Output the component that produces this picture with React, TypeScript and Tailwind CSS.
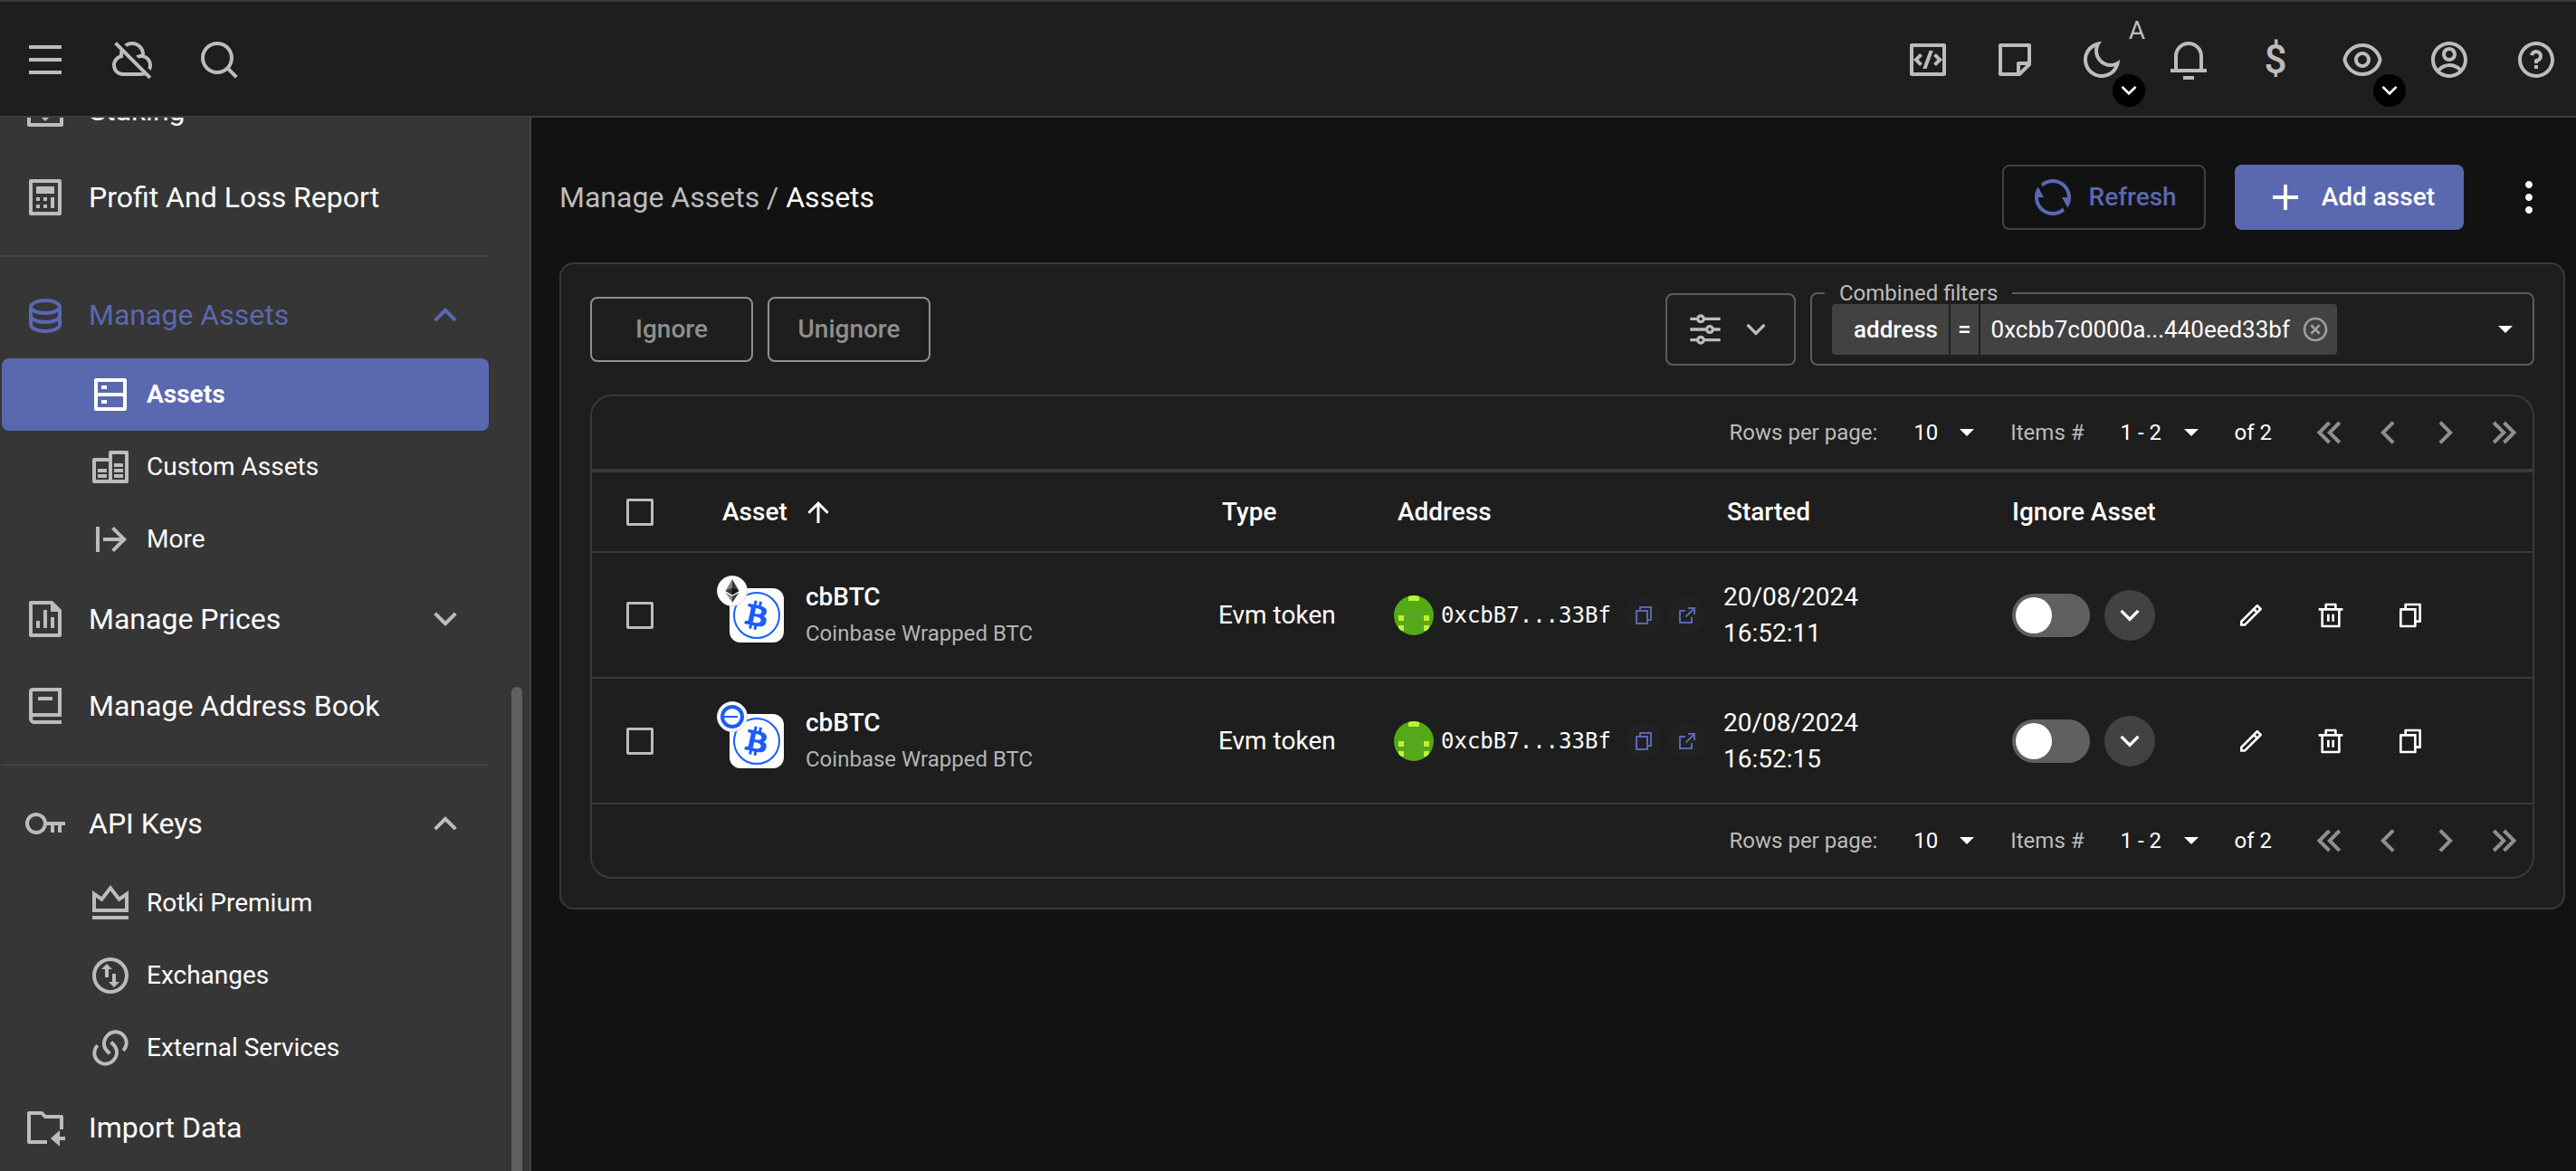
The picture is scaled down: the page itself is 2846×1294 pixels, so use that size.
import React from 'react';
import {
  RiMenuLine, RiCloudOffLine, RiSearchLine, RiCodeBoxLine, RiStickyNoteLine, RiMoonLine,
  RiNotification3Line, RiEyeLine, RiAccountCircleLine, RiQuestionLine, RiInboxArchiveLine,
  RiCalculatorLine, RiDatabase2Line, RiServerLine, RiFileChartLine, RiBook2Line, RiVipCrownLine,
  RiLinksLine, RiFolderReceivedLine, RiRefreshLine, RiAddLine, RiMore2Fill, RiEqualizerLine,
  RiArrowDownSLine, RiArrowUpSLine, RiArrowUpLine, RiCloseCircleLine, RiFileCopyLine,
  RiExternalLinkLine, RiPencilLine, RiDeleteBinLine, RiArrowLeftDoubleLine,
  RiArrowRightDoubleLine, RiArrowLeftSLine, RiArrowRightSLine,
} from 'react-icons/ri';
import { FaBtc } from 'react-icons/fa';

type IconType = React.ComponentType<{ className?: string }>;

function pathIcon(d: string): IconType {
  return function PathIcon({ className }) {
    return (
      <svg viewBox="0 0 24 24" fill="currentColor" fillRule="evenodd" className={className} aria-hidden="true">
        <path d={d} />
      </svg>
    );
  };
}

const KeyIcon = pathIcon(
  'M12.917 13A6.002 6.002 0 0 1 1 12a6 6 0 0 1 11.917-1H23v2h-2v4h-2v-4h-2v4h-2v-4h-2.083zM7 16a4 4 0 1 0 0-8 4 4 0 0 0 0 8z',
);
const BuildingsIcon = pathIcon(
  'M3 7h8V4a1 1 0 0 1 1-1h9a1 1 0 0 1 1 1v16a1 1 0 0 1-1 1H3a1 1 0 0 1-1-1V8a1 1 0 0 1 1-1zM4 9v10h7V9zM13 5v14h7V5zM5 13h5v2H5zM5 16h5v2H5zM14 10h5v2h-5zM14 13h5v2h-5zM14 16h5v2h-5z',
);
const StartArrowIcon = pathIcon('M4 5h2v14H4zM8 11h9.17l-4.58-4.58L14 5l7 7-7 7-1.41-1.41L17.17 13H8z');
const ExchangeIcon = pathIcon(
  'M12 22a10 10 0 1 1 0-20 10 10 0 0 1 0 20zm0-2a8 8 0 1 0 0-16 8 8 0 0 0 0 16zM10 5.5l3 3h-2V13H9V8.5H7zM13 11h2v4.5h2l-3 3-3-3h2z',
);
const CaretIcon = pathIcon('M12 15l-6-6h12z');

function HeaderButton({ icon: Icon, label, children }: { icon?: IconType; label: string; children?: React.ReactNode }) {
  return (
    <button type="button" aria-label={label} className="relative flex size-18 items-center justify-center rounded-full">
      {Icon && <Icon className="size-12" />}
      {children}
    </button>
  );
}

function ExpandBadge() {
  return (
    <span className="absolute top-13 left-12 flex size-9 items-center justify-center rounded-full bg-black text-white">
      <RiArrowDownSLine className="size-8" />
    </span>
  );
}

function Header() {
  return (
    <header className="flex h-[130px] shrink-0 items-center justify-between border-t-2 border-b-2 border-t-[#393939] border-b-[#3f3f3f] bg-[#1e1e1e] pt-0.5 pr-2 pl-3.5 text-[#bcbcbc]">
      <div className="flex gap-6">
        <HeaderButton icon={RiMenuLine} label="Menu" />
        <HeaderButton icon={RiCloudOffLine} label="Sync" />
        <HeaderButton icon={RiSearchLine} label="Search" />
      </div>
      <div className="flex gap-6">
        <HeaderButton icon={RiCodeBoxLine} label="Developer" />
        <HeaderButton icon={RiStickyNoteLine} label="Notes" />
        <HeaderButton icon={RiMoonLine} label="Theme">
          <span className="absolute -top-3 -right-3 text-[28px] leading-8">A</span>
          <ExpandBadge />
        </HeaderButton>
        <HeaderButton icon={RiNotification3Line} label="Notifications" />
        <HeaderButton label="Currency">
          <span className="text-[44px] leading-none font-medium">$</span>
        </HeaderButton>
        <HeaderButton icon={RiEyeLine} label="Privacy">
          <ExpandBadge />
        </HeaderButton>
        <HeaderButton icon={RiAccountCircleLine} label="Account" />
        <HeaderButton icon={RiQuestionLine} label="Help" />
      </div>
    </header>
  );
}

function NavItem({ icon: Icon, label, open, active }: { icon: IconType; label: string; open?: boolean; active?: boolean }) {
  return (
    <a
      href="#"
      className={`flex h-24 items-center gap-6 px-6 text-[32px] leading-10 ${active ? 'text-[#5a68b2]' : 'text-white'}`}
    >
      <Icon className={active ? 'size-12' : 'size-12 text-[#bcbcbc]'} />
      <span className="flex-1">{label}</span>
      {open === true && <RiArrowUpSLine className={active ? 'size-12' : 'size-12 text-[#bcbcbc]'} />}
      {open === false && <RiArrowDownSLine className="size-12 text-[#bcbcbc]" />}
    </a>
  );
}

function SubItem({ icon: Icon, label, active }: { icon: IconType; label: string; active?: boolean }) {
  return (
    <a
      href="#"
      className={`flex h-20 items-center gap-4 rounded-lg pl-24 text-[28px] leading-10 text-white ${active ? 'bg-[#5a68b0] font-bold' : ''}`}
    >
      <Icon className={active ? 'size-12' : 'size-12 text-[#bcbcbc]'} />
      <span>{label}</span>
    </a>
  );
}

function Divider() {
  return <hr className="my-4 border-t-2 border-[#434343]" />;
}

function Sidebar() {
  return (
    <aside className="flex w-[587px] shrink-0 overflow-hidden border-r-2 border-[#434343] bg-[#363636] pr-2">
      <nav className="-mt-14 ml-0.5 w-[538px]">
        <NavItem icon={RiInboxArchiveLine} label="Staking" />
        <NavItem icon={RiCalculatorLine} label="Profit And Loss Report" />
        <Divider />
        <NavItem icon={RiDatabase2Line} label="Manage Assets" open active />
        <SubItem icon={RiServerLine} label="Assets" active />
        <SubItem icon={BuildingsIcon} label="Custom Assets" />
        <SubItem icon={StartArrowIcon} label="More" />
        <NavItem icon={RiFileChartLine} label="Manage Prices" open={false} />
        <NavItem icon={RiBook2Line} label="Manage Address Book" />
        <Divider />
        <NavItem icon={KeyIcon} label="API Keys" open />
        <SubItem icon={RiVipCrownLine} label="Rotki Premium" />
        <SubItem icon={ExchangeIcon} label="Exchanges" />
        <SubItem icon={RiLinksLine} label="External Services" />
        <NavItem icon={RiFolderReceivedLine} label="Import Data" />
      </nav>
      <div className="ml-auto h-[46%] w-3 self-end rounded-t-full bg-[#606060]" />
    </aside>
  );
}

function PageSelect({ label, value }: { label: string; value: string }) {
  return (
    <label className="flex items-center gap-8 text-[#bcbcbc]">
      {label}
      <span className="relative flex items-center pl-2 text-white">
        <select className="appearance-none bg-transparent pr-12">
          <option>{value}</option>
        </select>
        <CaretIcon className="pointer-events-none absolute right-0 size-8" />
      </span>
    </label>
  );
}

function Pagination() {
  const controls: [string, IconType][] = [
    ['First page', RiArrowLeftDoubleLine],
    ['Previous page', RiArrowLeftSLine],
    ['Next page', RiArrowRightSLine],
    ['Last page', RiArrowRightDoubleLine],
  ];
  return (
    <div className="flex h-20 items-center justify-end gap-8 text-[24px] leading-8">
      <PageSelect label="Rows per page:" value="10" />
      <PageSelect label="Items #" value="1 - 2" />
      <span>of 2</span>
      <div className="flex text-[#8f8f8f]">
        {controls.map(([label, Icon]) => (
          <button key={label} type="button" aria-label={label} className="flex size-16 items-center justify-center">
            <Icon className="size-12" />
          </button>
        ))}
      </div>
    </div>
  );
}

function Checkbox({ label }: { label: string }) {
  return (
    <input
      type="checkbox"
      aria-label={label}
      className="block size-[30px] appearance-none rounded-[2px] border-3 border-[#bcbcbc]"
    />
  );
}

function EthereumLogo() {
  return (
    <svg viewBox="0 0 16 26" className="h-[26px] w-4" aria-hidden="true">
      <path d="M8 0v17.5l7.5-4.6z" fill="#3a3a3a" />
      <path d="M8 0L.5 12.9 8 17.5z" fill="#7d7d7d" />
      <path d="M8 9.5v8l7.5-4.6z" fill="#141414" />
      <path d="M8 9.5L.5 12.9 8 17.5z" fill="#393939" />
      <path d="M8 19v7l7.5-11.3z" fill="#3c3c3b" />
      <path d="M8 26v-7L.5 14.7z" fill="#8c8c8c" />
    </svg>
  );
}

function BaseLogo() {
  return (
    <svg viewBox="0 0 26 26" className="size-[26px]" aria-hidden="true">
      <circle cx="13" cy="13" r="11" fill="white" stroke="#1a5cff" strokeWidth="4" />
      <path d="M3 13h16" stroke="#1a5cff" strokeWidth="2" />
    </svg>
  );
}

function Identicon() {
  return (
    <svg viewBox="0 0 44 44" className="size-11 shrink-0 rounded-full" aria-hidden="true">
      <path fill="#54a917" d="M0 0h44v44H0z" />
      <path fill="#5ca32a" d="M12 19h20v5H12zM12 24h4v14h-4zM28 24h4v14h-4z" />
      <path fill="#bdf531" d="M16 0h12v6H16zM5 22h6v6H5zM33 22h6v6h-6zM5 33h6v6H5zM33 33h6v6h-6z" />
    </svg>
  );
}

function AssetRow({ logo, time }: { logo: React.ReactNode; time: string }) {
  const actions: [string, IconType][] = [
    ['Edit', RiPencilLine],
    ['Delete', RiDeleteBinLine],
    ['Copy', RiFileCopyLine],
  ];
  return (
    <tr className="h-[139px] border-t-2 border-[#393939]">
      <td className="pl-[38px]">
        <Checkbox label="Select cbBTC" />
      </td>
      <td className="pl-8">
        <div className="flex items-center">
          <div className="relative ml-3 flex size-15 items-center justify-center rounded-xl bg-white">
            <span className="flex size-[52px] items-center justify-center rounded-full border-2 border-[#1a5cff] text-[#1a5cff]">
              <FaBtc className="size-8 rotate-12" />
            </span>
            <span className="absolute -top-3.5 -left-3.5 flex size-[34px] items-center justify-center rounded-full border border-[#d8d8d8] bg-white">
              {logo}
            </span>
          </div>
          <div className="ml-6 leading-10">
            <div className="font-medium">cbBTC</div>
            <div className="text-[24px] leading-10 text-[#b4b4b4]">Coinbase Wrapped BTC</div>
          </div>
        </div>
      </td>
      <td className="pl-8">Evm token</td>
      <td className="pl-8">
        <div className="flex items-center">
          <Identicon />
          <span className="ml-2 font-['DejaVu_Sans_Mono',monospace] text-[24px]">0xcbB7...33Bf</span>
          <div className="ml-4 flex gap-2 text-[#5a68b2]">
            <button type="button" aria-label="Copy address" className="flex size-10 shrink-0 items-center justify-center rounded-full bg-[#212121]">
              <RiFileCopyLine className="size-6" />
            </button>
            <a href="#" aria-label="Open in explorer" className="flex size-10 shrink-0 items-center justify-center rounded-full bg-[#212121]">
              <RiExternalLinkLine className="size-6" />
            </a>
          </div>
        </div>
      </td>
      <td className="pl-8 leading-10">
        20/08/2024
        <br />
        {time}
      </td>
      <td className="pl-8">
        <div className="flex items-center gap-4">
          <input
            type="checkbox"
            role="switch"
            aria-label="Ignore asset"
            className="h-12 w-[86px] appearance-none rounded-full bg-[#606060] p-1 before:block before:size-10 before:rounded-full before:bg-white"
          />
          <button type="button" aria-label="Ignore options" className="flex size-14 items-center justify-center rounded-full bg-[#424242]">
            <RiArrowDownSLine className="size-10" />
          </button>
        </div>
      </td>
      <td className="pl-8">
        <div className="flex gap-4">
          {actions.map(([label, Icon]) => (
            <button key={label} type="button" aria-label={label} className="flex size-18 items-center justify-center">
              <Icon className="size-8" />
            </button>
          ))}
        </div>
      </td>
    </tr>
  );
}

function AssetTable() {
  return (
    <div className="mt-8 rounded-3xl border-2 border-[#393939]">
      <Pagination />
      <table className="w-full table-fixed border-collapse border-t-4 border-b-2 border-[#393939] text-left text-[28px]">
        <colgroup>
          <col className="w-[108px]" />
          <col />
          <col className="w-[194px]" />
          <col className="w-[364px]" />
          <col className="w-[319px]" />
          <col className="w-[228px]" />
          <col className="w-[379px]" />
        </colgroup>
        <thead>
          <tr className="h-[90px]">
            <th className="pl-[38px]"><Checkbox label="Select all" /></th>
            <th className="pl-9 font-medium" aria-sort="ascending">
              <button type="button" className="flex items-center gap-4">
                Asset
                <RiArrowUpLine className="size-9" />
              </button>
            </th>
            <th className="pl-9 font-medium">Type</th>
            <th className="pl-9 font-medium">Address</th>
            <th className="pl-9 font-medium">Started</th>
            <th className="pl-8 font-medium whitespace-nowrap">Ignore Asset</th>
            <th aria-label="Actions" />
          </tr>
        </thead>
        <tbody>
          <AssetRow logo={<EthereumLogo />} time="16:52:11" />
          <AssetRow logo={<BaseLogo />} time="16:52:15" />
        </tbody>
      </table>
      <Pagination />
    </div>
  );
}

function Filters() {
  return (
    <div className="flex items-center justify-between">
      <div className="flex gap-4">
        {['Ignore', 'Unignore'].map((label) => (
          <button
            key={label}
            type="button"
            className="h-18 w-45 rounded-lg border-2 border-[#8f8f8f] text-[28px] font-medium text-[#8f8f8f]"
          >
            {label}
          </button>
        ))}
      </div>
      <div className="flex gap-4">
        <button
          type="button"
          aria-label="Table filters"
          className="flex h-20 w-36 items-center justify-center gap-4 rounded-lg border-2 border-[#5c5c5c] text-[#bcbcbc]"
        >
          <RiEqualizerLine className="size-10" />
          <RiArrowDownSLine className="size-10" />
        </button>
        <div className="relative flex h-20 w-[800px] items-center pr-4 pl-6">
          <fieldset className="pointer-events-none absolute inset-x-0 -top-4 bottom-0 rounded-lg border-2 border-[#5c5c5c] pl-3.5">
            <legend className="px-4 text-[24px] leading-8 text-[#bcbcbc]">Combined filters</legend>
          </fieldset>
          <div className="flex h-14 items-stretch gap-0.5 overflow-hidden rounded-sm text-[26px] leading-[56px]">
            <span className="bg-[#424242] pr-3 pl-6 font-medium">address</span>
            <span className="bg-[#424242] px-2 font-medium">=</span>
            <span className="flex items-center gap-3 bg-[#424242] pr-2 pl-3">
              0xcbb7c0000a...440eed33bf
              <button type="button" aria-label="Remove filter" className="text-[#9e9e9e]">
                <RiCloseCircleLine className="size-8" />
              </button>
            </span>
          </div>
          <button type="button" aria-label="Show filters" className="ml-auto">
            <CaretIcon className="size-8" />
          </button>
        </div>
      </div>
    </div>
  );
}

export default function App() {
  return (
    <div className="flex h-screen flex-col overflow-hidden bg-[#121212] font-[Roboto,sans-serif] text-white">
      <Header />
      <div className="flex min-h-0 flex-1">
        <Sidebar />
        <main className="min-w-0 flex-1 pt-13 pr-3 pl-[31px]">
          <div className="flex h-18 items-center gap-8">
            <nav aria-label="Breadcrumb" className="flex-1 text-[32px]">
              <a href="#" className="text-[#bcbcbc]">Manage Assets</a>
              <span className="text-[#bcbcbc]"> / </span>
              <span>Assets</span>
            </nav>
            <button
              type="button"
              className="flex h-18 items-center gap-4 rounded-lg border-2 border-[#424242] px-[30px] text-[28px] font-medium text-[#5a68b2]"
            >
              <RiRefreshLine className="size-12" />
              Refresh
            </button>
            <button type="button" className="flex h-18 items-center gap-4 rounded-lg bg-[#5a68b0] px-8 text-[28px] font-medium">
              <RiAddLine className="size-12" />
              Add asset
            </button>
            <button type="button" aria-label="More actions" className="flex size-20 items-center justify-center">
              <RiMore2Fill className="size-12" />
            </button>
          </div>
          <section className="mt-9 rounded-2xl border-2 border-[#393939] bg-[#1e1e1e] p-8">
            <Filters />
            <AssetTable />
          </section>
        </main>
      </div>
    </div>
  );
}
